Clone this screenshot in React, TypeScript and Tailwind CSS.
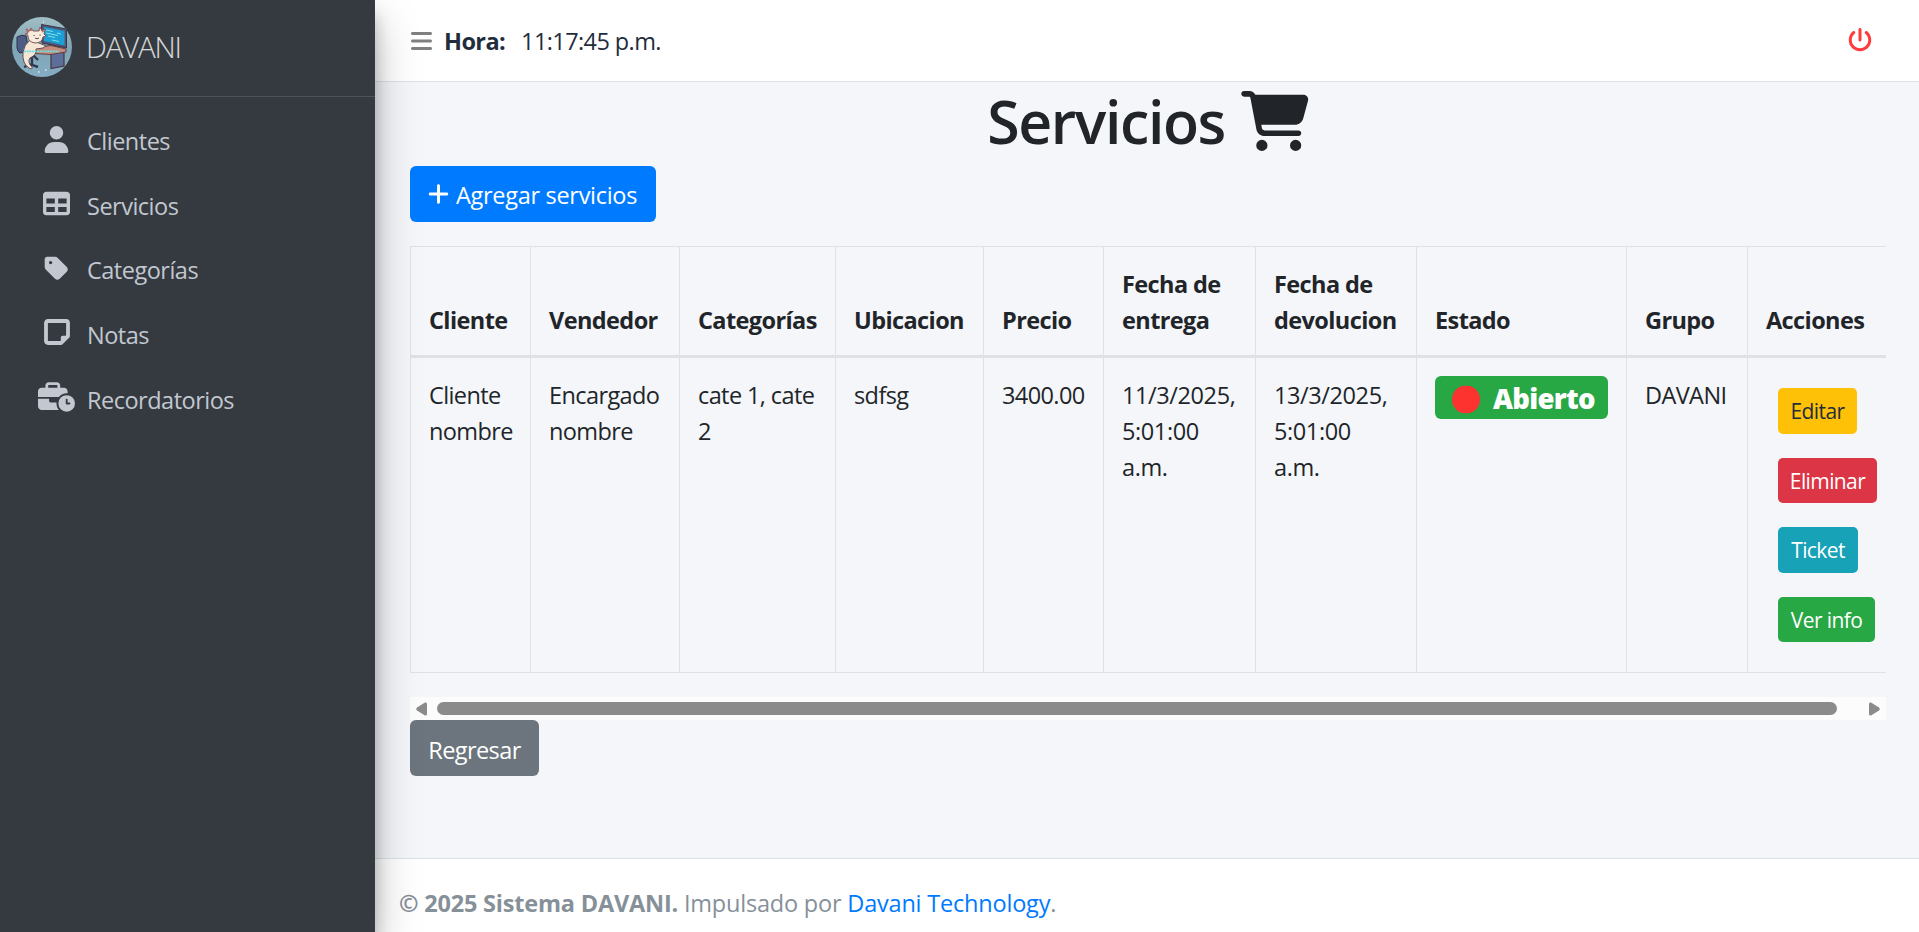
import type { ReactNode } from "react";
import {
  FaBars,
  FaBusinessTime,
  FaCartShopping,
  FaCircle,
  FaPlus,
  FaPowerOff,
  FaTable,
  FaTag,
  FaUser,
} from "react-icons/fa6";

function NoteIcon({ className }: { className?: string }) {
  return (
    <svg viewBox="0 0 26 26" className={className} fill="none">
      <path
        d="M2 4q0-2 2-2h18q2 0 2 2v13.2L17.2 24H4q-2 0-2-2z"
        stroke="currentColor"
        strokeWidth="3.8"
        strokeLinejoin="round"
      />
      <path d="M16.8 25v-6.5q0-1.8 1.8-1.8H25z" fill="currentColor" />
    </svg>
  );
}

const navItems = [
  { label: "Clientes", Icon: FaUser, size: "size-[27px] -translate-y-0.5" },
  { label: "Servicios", Icon: FaTable, size: "size-[27px] -translate-y-0.5" },
  { label: "Categorías", Icon: FaTag, size: "size-[27px] -translate-y-0.5" },
  { label: "Notas", Icon: NoteIcon, size: "size-[26px] -translate-y-[3px]" },
  { label: "Recordatorios", Icon: FaBusinessTime, size: "h-[30px] w-[37px] -translate-y-[3px]" },
];

const columns = [
  { label: "Cliente", width: "w-[120px]" },
  { label: "Vendedor", width: "w-[149px]" },
  { label: "Categorías", width: "w-[156px]" },
  { label: "Ubicacion", width: "w-[148px]" },
  { label: "Precio", width: "w-[120px]" },
  { label: "Fecha de entrega", width: "w-[152px]" },
  { label: "Fecha de devolucion", width: "w-[161px]" },
  { label: "Estado", width: "w-[210px]" },
  { label: "Grupo", width: "w-[121px]" },
  { label: "Acciones", width: "w-[139px]" },
];

const actions = [
  { label: "Editar", style: "w-[79px] bg-[#ffc107] text-[#1f2d3d]" },
  { label: "Eliminar", style: "w-[99px] bg-[#dc3545] text-white" },
  { label: "Ticket", style: "w-[80px] bg-[#17a2b8] text-white" },
  { label: "Ver info", style: "w-[97px] bg-[#28a745] text-white" },
];

function Logo() {
  return (
    <svg viewBox="0 0 60 60" className="size-[60px] shrink-0 overflow-hidden rounded-full">
      <defs>
        <linearGradient id="sky" x1="0" y1="0" x2="0" y2="1">
          <stop offset="0" stopColor="#a2bfc5" />
          <stop offset="0.5" stopColor="#7fa5b3" />
          <stop offset="1" stopColor="#86adc4" />
        </linearGradient>
      </defs>
      <rect width="60" height="60" fill="url(#sky)" />
      <path d="M29.5 7.5l25 4.5v19L30 26z" fill="#4f5876" stroke="#39324a" />
      <path d="M32 10l20.5 4v14.5L32 24z" fill="#1c9fd4" />
      <path d="M34 13l7 1.5M34 16l12 2.5M36 19l7 1.5M40 23l7 1.5M45 16l4 1" stroke="#8ce6e6" strokeWidth="0.9" />
      <path d="M5 20q5-3 9-1l3 15-9 2q-3-2-3-6z" fill="#4c5c84" stroke="#2c3148" />
      <path d="M39 36l13-1v14l-13 2.5z" fill="#5c6f9b" stroke="#4b3442" strokeWidth="1.2" />
      <path d="M22 31l17-2.5L54 32v3l-15 2.5-17-1z" fill="#c68d7f" stroke="#5c383c" strokeWidth="0.9" />
      <path d="M12 42l10-3 4 4M20 41v7l6 2M20 47l-8 3" stroke="#303850" strokeWidth="2.4" fill="none" />
      <path d="M18 23q-6 5-7 12-1 12 6 16 4 2 3-1-5-5-2-9 7-3 6-9l7-1 3-2-7-3z" fill="#f5e6d6" stroke="#5a4146" strokeWidth="0.9" />
      <path d="M16 19l-3-2 3-1-2-4 4 2 1-3 2 3h6l1-4 2 4 3-2-1 5 2 2-3 1q-1 6-8 6-7-1-7-7z" fill="#f7ebde" stroke="#76494e" strokeWidth="0.9" />
      <path d="M14 12.500l3 2.500M19 11.500l1 2.500M28 10.500l-1 3M33 13l-3 2M13.500 17.500l3 .5" stroke="#c1666c" strokeWidth="1.200" />
      <path d="M21.500 18.500h1.200M27.500 18h1.200M23 21q2 1.500 4 0" stroke="#54353b" strokeWidth="0.9" fill="none" />
      <path d="M12 34.300h35" stroke="#6adfe2" strokeWidth="1.800" strokeDasharray="2 .6" />
      <path d="M26 55h1.500M33 53h1.500M31 5h1" stroke="#d5eef3" strokeWidth="1.400" />
    </svg>
  );
}

function Cell({ children }: { children?: ReactNode }) {
  return (
    <td className="border-b border-l border-[#dee2e6] pt-[18px] pl-[18px] align-top">{children}</td>
  );
}

function Lines({ children }: { children: ReactNode }) {
  return <div className="pt-px">{children}</div>;
}

export default function App() {
  return (
    <div className="flex h-[932px] w-[1919px] overflow-hidden bg-[#f4f6f9] font-['Open_Sans',sans-serif] text-[23.5px] leading-9 tracking-[-0.6px] text-[#212529]">
      <aside className="z-10 flex w-[375px] shrink-0 flex-col bg-[#343a40] shadow-[0_21px_42px_rgba(0,0,0,0.25),0_15px_15px_rgba(0,0,0,0.22)]">
        <div className="flex h-[97px] items-center gap-3.5 border-b border-[#4b545c] pb-0.5 pl-3">
          <Logo />
          <span className="text-[29.5px] font-light tracking-[-1.2px] text-white/80">DAVANI</span>
        </div>
        <nav className="flex flex-col pt-[12px] text-[#c2c7d0]">
          {navItems.map(({ label, Icon, size }) => (
            <a key={label} className="flex h-[64.6px] items-center">
              <span className="ml-[31px] flex w-[51px] justify-center">
                <Icon className={size} />
              </span>
              <span className="ml-[5px] tracking-[-0.5px]">{label}</span>
            </a>
          ))}
        </nav>
      </aside>

      <div className="flex min-w-0 flex-1 flex-col">
        <header className="flex h-[82px] shrink-0 items-center border-b border-[#dee2e6] bg-white pr-[47px] pl-[35px] text-[#1f2d3d]">
          <FaBars className="ml-px h-6 w-[21px] text-[#808080]" />
          <strong className="ml-[12px] font-bold">Hora:</strong>
          <span className="ml-[16px]">11:17:45 p.m.</span>
          <FaPowerOff className="ml-auto size-6 -translate-y-px text-[#ff3b3b]" />
        </header>

        <main className="flex flex-1 flex-col items-start pl-[35px]">
          <h1 className="flex h-[72px] w-[1476px] items-center justify-center gap-4 pt-[5px] text-[59px] font-semibold tracking-[-1.4px]">
            Servicios
            <FaCartShopping className="h-[60px] w-[68px]" />
          </h1>
          <button className="mt-3 flex h-14 w-[246px] items-center rounded-md bg-[#007bff] pt-0.5 pl-[18px] text-white">
            <FaPlus className="h-6 w-[21px] -translate-y-px" />
            <span className="ml-[7px] tracking-[-0.3px]">Agregar servicios</span>
          </button>

          <div className="mt-6 w-[1476px] overflow-hidden">
            <table className="w-[1476px] table-fixed border-separate border-spacing-0">
              <thead>
                <tr className="h-[112px]">
                  {columns.map(({ label, width }) => (
                    <th
                      key={label}
                      className={`${width} border-t border-b-3 border-l border-[#dee2e6] pt-[19px] pb-[17px] pl-[18px] text-left align-bottom font-bold`}
                    >
                      {label}
                    </th>
                  ))}
                </tr>
              </thead>
              <tbody>
                <tr className="h-[315px]">
                  <Cell><Lines>Cliente nombre</Lines></Cell>
                  <Cell><Lines>Encargado nombre</Lines></Cell>
                  <Cell><Lines>cate 1, cate<br />2</Lines></Cell>
                  <Cell><Lines>sdfsg</Lines></Cell>
                  <Cell><Lines>3400.00</Lines></Cell>
                  <Cell><div className="pt-px tracking-[-0.4px]">11/3/2025,<br />5:01:00<br />a.m.</div></Cell>
                  <Cell><div className="pt-px tracking-[-0.4px]">13/3/2025,<br />5:01:00<br />a.m.</div></Cell>
                  <Cell>
                    <span className="flex h-[43px] w-[173px] items-center rounded-md bg-[#28a745] pl-[17px] text-[27.5px] font-extrabold text-white">
                      <FaCircle className="size-[28px] translate-y-[1.5px] text-[#fd3330]" />
                      <span className="ml-[13px] translate-y-px tracking-[-0.7px]">Abierto</span>
                    </span>
                  </Cell>
                  <Cell><Lines>DAVANI</Lines></Cell>
                  <Cell>
                    <div className="flex flex-col gap-6 pt-3 pl-3">
                      {actions.map(({ label, style }) => (
                        <button key={label} className={`flex h-[45.6px] items-center justify-center rounded-[5px] pt-px text-[21px] ${style}`}>
                          {label}
                        </button>
                      ))}
                    </div>
                  </Cell>
                </tr>
              </tbody>
            </table>
          </div>

          <div className="mt-6 flex h-[23px] w-[1476px] items-center bg-[#fcfcfc] px-1.5">
            <svg viewBox="0 0 11 14" className="h-[14px] w-[11px] fill-[#8b8b8b]">
              <path d="M9 0.5Q11 0 11 2v10q0 2-2 1.5L1 8.5Q-.5 7 1 5.5z" />
            </svg>
            <div className="ml-[10px] h-[13px] w-[1400px] rounded-full bg-[#8b8b8b]" />
            <svg viewBox="0 0 11 14" className="ml-auto h-[14px] w-[11px] rotate-180 fill-[#8b8b8b]">
              <path d="M9 0.5Q11 0 11 2v10q0 2-2 1.5L1 8.5Q-.5 7 1 5.5z" />
            </svg>
          </div>
          <button className="flex h-14 w-[129px] items-center justify-center rounded-md bg-[#6c757d] pt-[3px] text-white">
            Regresar
          </button>
        </main>

        <footer className="flex h-[74px] shrink-0 items-center border-t border-[#dee2e6] bg-white pt-[15px] pl-6 tracking-[-0.2px] text-[#869099]">
          <p>
            <strong className="font-bold">© 2025 Sistema DAVANI.</strong> Impulsado por{" "}
            <a className="text-[#007bff]">Davani Technology</a>.
          </p>
        </footer>
      </div>
    </div>
  );
}
